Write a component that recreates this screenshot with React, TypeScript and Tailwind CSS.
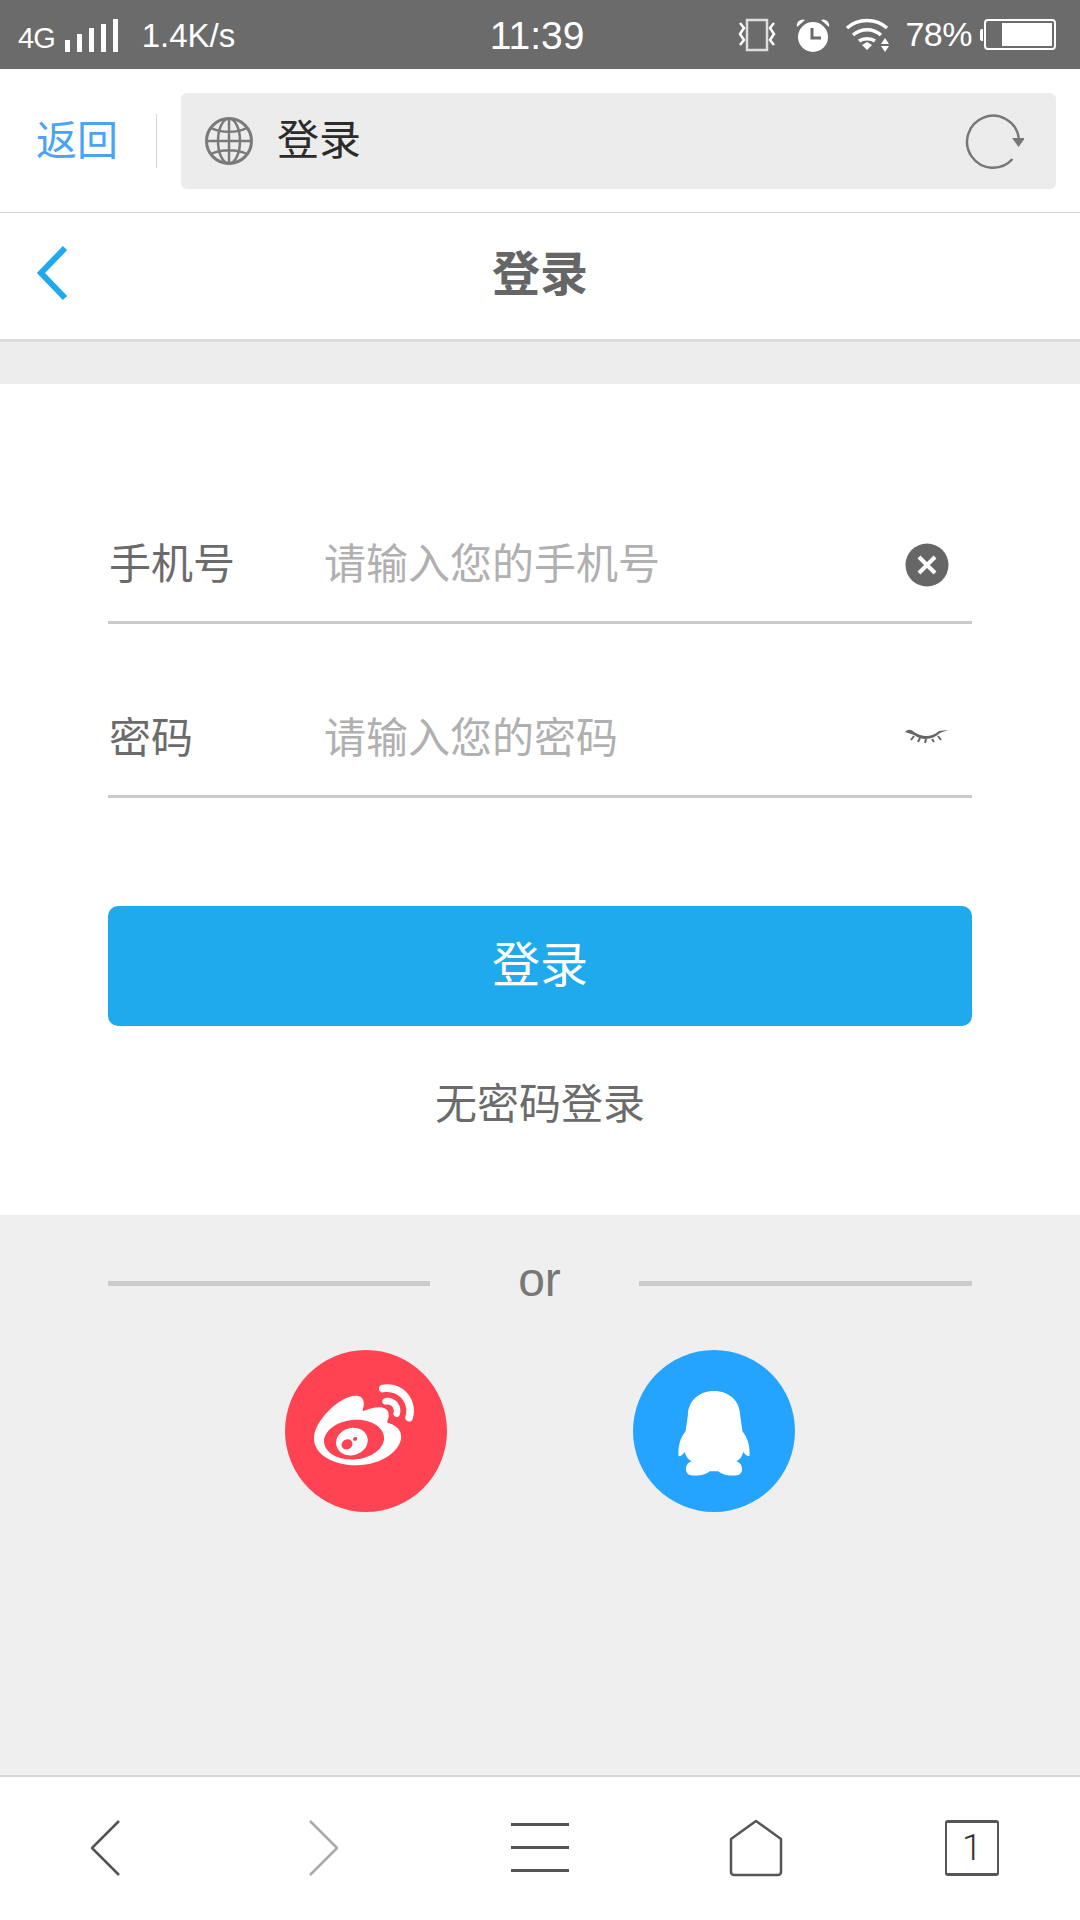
import React from "react";
import { FaWeibo } from "react-icons/fa";

const cjk = "font-['Liberation_Sans','Noto_Sans_CJK_SC',sans-serif]";

function StatusBar() {
  return (
    <div className="flex h-[69px] items-center justify-between bg-[#6b6b6b] pl-[18px] pr-[24px] text-white">
      <div className="flex w-[400px] items-center">
        <span className="mt-[8px] text-[29px] tracking-[-1px]">4G</span>
        <svg width="56" height="34" viewBox="0 0 56 34" className="ml-[10px] mt-[3px]" fill="#fff">
          <rect x="0" y="21" width="5" height="12" />
          <rect x="12" y="15" width="5" height="18" />
          <rect x="24" y="9" width="5" height="24" />
          <rect x="36" y="5" width="5" height="28" />
          <rect x="48" y="0" width="5" height="33" />
        </svg>
        <span className="ml-[21px] mt-[2px] text-[33px]">1.4K/s</span>
      </div>
      <span className="mt-[3px] text-[39px]">11:39</span>
      <div className="flex w-[400px] items-center justify-end">
        <svg width="40" height="34" viewBox="0 0 40 34" fill="none" stroke="#fff" strokeWidth="2.5">
          <rect x="10" y="2" width="20" height="30" stroke="#ddd" />
          <path d="M3 5l4 5-4 6 4 6-4 5M37 5l-4 5 4 6-4 6 4 5" />
        </svg>
        <svg width="36" height="34" viewBox="0 0 36 34" className="ml-[18px]">
          <circle cx="18" cy="19" r="15" fill="#fff" />
          <path d="M17 10v10h9" fill="none" stroke="#6b6b6b" strokeWidth="3" />
          <path d="M2 9a6 6 0 0 1 8-7zM34 9a6 6 0 0 0-8-7z" fill="#fff" />
        </svg>
        <svg width="48" height="34" viewBox="0 0 48 34" className="ml-[14px]" fill="none" stroke="#fff" strokeWidth="3.5">
          <path d="M2 10c11-10 29-10 40 0" />
          <path d="M8 17c8-7 20-7 28 0" />
          <path d="M14 23c4-3 12-3 16 0" />
          <path d="M17 27l5-3 5 3-5 5z" fill="#fff" stroke="none" />
          <path d="M40 20l4 6h-8zM36 28h8l-4 6z" fill="#fff" stroke="none" />
        </svg>
        <span className="ml-[12px] text-[34px] tracking-[-0.5px]">78%</span>
        <div className="ml-[8px] h-[12px] w-[3px] rounded-l-[2px] bg-white" />
        <div className="ml-[1px] flex h-[31px] w-[72px] justify-end rounded-[4px] border-2 border-white p-[2px]">
          <div className="h-full w-[50px] bg-white" />
        </div>
      </div>
    </div>
  );
}

function AddressBar() {
  return (
    <div className="flex h-[144px] items-center border-b border-[#d4d4d4] bg-white pr-[24px]">
      <span className="w-[157px] border-r border-[#d4d4d4] pl-[36px] text-[41px] leading-[54px] text-[#4aa3f5]">返回</span>
      <div className="ml-[24px] flex h-[96px] flex-1 items-center rounded-[6px] bg-[#ececec] pl-[24px] pr-[32px]">
        <svg width="48" height="48" viewBox="0 0 48 48" fill="none" stroke="#7a7a7a" strokeWidth="2.5">
          <circle cx="24" cy="24" r="22.5" strokeWidth="3" />
          <ellipse cx="24" cy="24" rx="11" ry="22.5" />
          <path d="M24 2v44M2 24h44M6 11c10 5 26 5 36 0M6 37c10-5 26-5 36 0" />
        </svg>
        <span className="ml-[24px] flex-1 text-[42px] text-[#2b2b2b]">登录</span>
        <svg width="60" height="56" viewBox="0 0 60 56" fill="none" stroke="#777" strokeWidth="2.5">
          <path d="M54.800 25A26 26 0 1 0 48.500 46" />
          <path d="M48 25h13l-6.500 9z" fill="#777" stroke="none" />
        </svg>
      </div>
    </div>
  );
}

function Field({ label, placeholder, icon }: { label: string; placeholder: string; icon: React.ReactNode }) {
  return (
    <div className="flex h-[99px] items-center border-b-[3px] border-[#cbcbcb] pb-[17px]">
      <span className="w-[216px] pl-[1px] text-[42px] text-[#6b6b6b]">{label}</span>
      <span className="flex-1 text-[42px] text-[#b0b0b0]">{placeholder}</span>
      <div className="flex w-[67px] justify-start">{icon}</div>
    </div>
  );
}

export default function App() {
  return (
    <div className={`${cjk} flex h-[1920px] w-[1080px] flex-col overflow-hidden bg-white`}>
      <StatusBar />
      <AddressBar />

      <div className="relative flex h-[129px] items-center justify-center border-b-[3px] border-[#dcdcdc]">
        <svg width="36" height="58" viewBox="0 0 36 58" fill="none" stroke="#1eaaed" strokeWidth="6" className="absolute left-[34px] top-[31px]">
          <path d="M31 4L7 29l24 25" />
        </svg>
        <span className="mb-[2px] text-[48px] font-bold text-[#666]">登录</span>
      </div>
      <div className="h-[42px] bg-[#ededed]" />

      <div className="flex h-[831px] flex-col px-[108px] pt-[141px]">
        <Field
          label="手机号"
          placeholder="请输入您的手机号"
          icon={
            <svg width="44" height="44" viewBox="0 0 44 44">
              <circle cx="22" cy="22" r="21.5" fill="#666" />
              <path d="M14 14l16 16M30 14L14 30" stroke="#fff" strokeWidth="4" />
            </svg>
          }
        />
        <div className="mt-[75px]">
          <Field
            label="密码"
            placeholder="请输入您的密码"
            icon={
              <svg width="44" height="16" viewBox="0 0 44 16" fill="none" stroke="#666" strokeWidth="2" className="mb-[6px]">
                <path d="M0 4c3-3 6-3 9 0 9 6 18 5 25-1l9-1-8 3c-7 7-18 8-26 2z" fill="#666" stroke="none" />
                <path d="M9 8l-3 4M15 10l-2 4M21 11l-1 4M27 11l2 3M33 8l3 4" />
              </svg>
            }
          />
        </div>
        <button className="mt-[108px] h-[120px] rounded-[10px] bg-[#1eaaed] text-[48px] text-white">登录</button>
        <div className="mt-[48px] text-center text-[42px] leading-[62px] text-[#6b6b6b]">无密码登录</div>
      </div>

      <div className="flex h-[562px] flex-col border-b-2 border-[#d6d6d6] bg-[#efefef] px-[108px]">
        <div className="mt-[32px] flex h-[66px] items-center justify-between">
          <div className="mt-[7px] h-[5px] w-[322px] bg-[#cbcbcb]" />
          <span className="ml-[10px] text-[48px] text-[#777]">or</span>
          <div className="mt-[7px] h-[5px] w-[333px] bg-[#cbcbcb]" />
        </div>
        <div className="mt-[37px] flex justify-center gap-[186px]">
          <div className="flex h-[162px] w-[162px] items-center justify-center rounded-full bg-[#ff4352]">
            <FaWeibo className="mb-[6px] mr-[4px] text-white" size={100} />
          </div>
          <div className="flex h-[162px] w-[162px] items-center justify-center rounded-full bg-[#25a4ff]">
            <svg width="76" height="85" viewBox="-2 0 214 254" fill="#fff" className="mt-[4px]">
              <path d="M105 0C150 0 183 30 183 72L190 120C205 140 213 160 211 195C205 195 198 190 192 182C190 195 182 205 172 210C190 215 195 240 180 250C160 256 130 252 118 240H92C80 252 50 256 30 250C15 240 20 215 38 210C28 205 20 195 18 182C12 190 5 195 -1 195C-3 160 5 140 20 120L27 72C27 30 60 0 105 0Z" />
            </svg>
          </div>
        </div>
      </div>

      <div className="grid flex-1 grid-cols-5 items-center justify-items-center pb-[2px]">
        <svg width="32" height="58" viewBox="0 0 32 58" fill="none" stroke="#555" strokeWidth="2.5" className="mr-[6px]">
          <path d="M30 2L3 29l27 27" strokeLinejoin="round" />
        </svg>
        <svg width="32" height="58" viewBox="0 0 32 58" fill="none" stroke="#aaa" strokeWidth="2.5">
          <path d="M2 2l27 27L2 56" strokeLinejoin="round" />
        </svg>
        <svg width="58" height="50" viewBox="0 0 58 50" fill="#555">
          <rect y="0" width="58" height="3" />
          <rect y="23" width="58" height="3" />
          <rect y="46" width="58" height="3" />
        </svg>
        <svg width="54" height="58" viewBox="0 0 54 58" fill="none" stroke="#555" strokeWidth="2.5">
          <path d="M27 2L52 20v33a3 3 0 0 1-3 3H5a3 3 0 0 1-3-3V20z" strokeLinejoin="round" />
        </svg>
        <div className="flex h-[56px] w-[54px] items-center justify-center rounded-[3px] border-x-2 border-y-[3px] border-[#555] font-['Roboto',sans-serif] text-[36px] font-light leading-none text-[#333]">1</div>
      </div>
    </div>
  );
}
